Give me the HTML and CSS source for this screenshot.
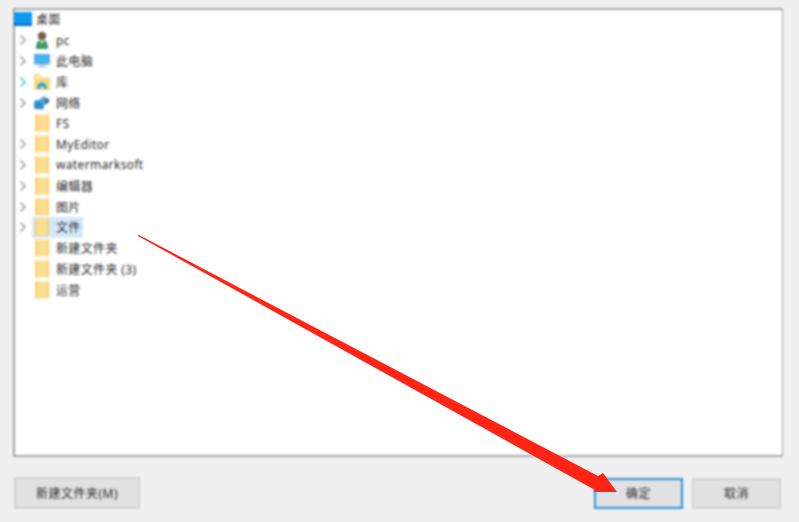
FILE: index.html
```html
<!DOCTYPE html>
<html lang="zh-CN">
<head>
  <meta charset="UTF-8">
  <title>浏览文件夹</title>
  <link rel="stylesheet" href="styles.css">
</head>
<body>
  <svg class="defs" width="0" height="0">
    <symbol id="folder" viewBox="0 0 16 20">
      <path d="M1 1.500h14v17H1z" fill="#fcdc8e"/>
      <path d="M1 1.500h2v17H1z" fill="#f6d078"/>
      <path d="M14 1.500h1v17h-1z" fill="#f2c766"/>
    </symbol>
    <symbol id="chev" viewBox="0 0 8 12">
      <path d="M1.500 1.500L6 6l-4.500 4.500" fill="none" stroke="currentColor" stroke-width="1.600"/>
    </symbol>
  </svg>

  <div class="dialog">
    <div class="tree">
      <div class="row root">
        <svg class="icon wide" viewBox="0 0 18 14"><path d="M0 0h18v14H0z" fill="#0a9af2"/><path d="M0 11.500h18V14H0z" fill="#0670c4"/></svg>
        <span class="name">桌面</span>
      </div>
      <div class="row">
        <svg class="arrow"><use href="#chev"/></svg>
        <svg class="icon" viewBox="0 0 16 20"><circle cx="8" cy="6" r="4.200" fill="#76604c"/><path d="M2 19c0-7 2-9 6-9s6 2 6 9z" fill="#3c9a6c"/><path d="M6 10h4l-2 4z" fill="#e6dccc"/></svg>
        <span class="name">pc</span>
      </div>
      <div class="row">
        <svg class="arrow"><use href="#chev"/></svg>
        <svg class="icon" viewBox="0 0 18 18"><path d="M0 1h18v12H0z" fill="#7aa8cc"/><path d="M1 2h16v10H1z" fill="#44b4f2"/><path d="M6 13h6v2H6z" fill="#a8bccb"/><path d="M3 15h12v2H3z" fill="#cdd8e0"/></svg>
        <span class="name">此电脑</span>
      </div>
      <div class="row">
        <svg class="arrow open"><use href="#chev"/></svg>
        <svg class="icon" viewBox="0 0 18 18"><path d="M0 0h7l2 4h9v14H0z" fill="#fbd87e"/><path d="M2 2h4l1 3H2z" fill="#fff2c8"/><path d="M4 17v-5l5-3 5 3v5h-3v-3H7v3z" fill="#22a4dc"/></svg>
        <span class="name">库</span>
      </div>
      <div class="row">
        <svg class="arrow"><use href="#chev"/></svg>
        <svg class="icon" viewBox="0 0 18 18"><path d="M0 9c0-2 1-3 3-3h8v10H3c-2 0-3-1-3-3z" fill="#2f8ed2"/><path d="M5 6l6-5 6 4-2 5-4 1z" fill="#5aaadc"/><path d="M12 5l5-1v4l-5 3z" fill="#3a6f96"/></svg>
        <span class="name">网络</span>
      </div>
      <div class="row"><i class="arrow"></i><svg class="icon"><use href="#folder"/></svg><span class="name">FS</span></div>
      <div class="row"><svg class="arrow"><use href="#chev"/></svg><svg class="icon"><use href="#folder"/></svg><span class="name">MyEditor</span></div>
      <div class="row"><svg class="arrow"><use href="#chev"/></svg><svg class="icon"><use href="#folder"/></svg><span class="name">watermarksoft</span></div>
      <div class="row"><svg class="arrow"><use href="#chev"/></svg><svg class="icon"><use href="#folder"/></svg><span class="name">编辑器</span></div>
      <div class="row"><svg class="arrow"><use href="#chev"/></svg><svg class="icon"><use href="#folder"/></svg><span class="name">图片</span></div>
      <div class="row selected"><svg class="arrow"><use href="#chev"/></svg><svg class="icon"><use href="#folder"/></svg><span class="name">文件</span></div>
      <div class="row"><i class="arrow"></i><svg class="icon"><use href="#folder"/></svg><span class="name">新建文件夹</span></div>
      <div class="row"><i class="arrow"></i><svg class="icon"><use href="#folder"/></svg><span class="name">新建文件夹 (3)</span></div>
      <div class="row"><i class="arrow"></i><svg class="icon"><use href="#folder"/></svg><span class="name">运营</span></div>
    </div>

    <div class="footer">
      <button class="btn new-folder">新建文件夹(M)</button>
      <div class="actions">
        <button class="btn primary">确定</button>
        <button class="btn">取消</button>
      </div>
    </div>
  </div>

  <!-- red arrow drawn over the screenshot -->
  <svg class="annotation" width="799" height="522" viewBox="0 0 799 522">
    <path d="M138 234.500L598 476L603 473L617 492L593 492L595 490L138 236z" fill="#ff2416"/>
  </svg>
</body>
</html>
```

FILE: styles.css
```css
* { box-sizing: border-box; }
html, body { margin: 0; height: 100%; }
body { background: #f0f0f0; font-family: "Noto Sans", "Noto Sans CJK SC", sans-serif; font-size: 12px; color: #2b2b2b; overflow: hidden; }
.defs { display: block; height: 0; }
.dialog { display: flex; flex-direction: column; height: 522px; padding: 8px 16px 13px 13px; filter: blur(0.8px); }
.tree { flex: none; height: 449px; padding: 0 0 0 1px; background: #fff; border: 2px solid #a8a8a8; border-left-color: #a0a0a0; border-right-width: 1px; }
.row { display: flex; align-items: center; height: 20.8px; width: max-content; letter-spacing: 0.35px; }
.root { margin-left: -2px; margin-top: -1px; }
.root .name { margin-left: 4px; }
.arrow { display: block; flex: none; width: 8px; height: 12px; margin-left: 3px; margin-right: 7px; color: #a0a0a0; }
.arrow.open { color: #45c4f5; }
.icon { display: block; flex: none; width: 16px; height: 20px; }
.icon.wide { width: 18px; height: 14px; }
.name { margin-left: 6px; white-space: nowrap; }
.selected { position: relative; }
.selected::before { content: ""; position: absolute; left: 16px; right: -2px; top: 0; bottom: 0; background: #d3e9fb; z-index: 0; }
.selected > * { position: relative; z-index: 1; }
.footer { display: flex; justify-content: space-between; align-items: flex-end; flex: 1; padding-left: 1px; }
.actions { display: flex; gap: 9px; margin-right: 2px; }
.btn { height: 31px; width: 89px; padding: 0 0 1px; background: #e1e1e1; border: 2px solid #d2d2d2; font: inherit; color: #2b2b2b; letter-spacing: 0.5px; }
.new-folder { width: 126px; height: 32px; }
.primary { border-color: #2a8fe0; }
.annotation { position: absolute; left: 0; top: 0; }
```
